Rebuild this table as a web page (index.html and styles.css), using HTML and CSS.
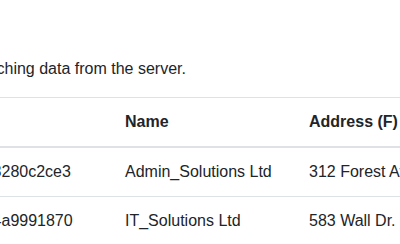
FILE: index.html
```html
<!DOCTYPE html>
<html lang="en">
<head>
<meta charset="utf-8">
<title>Companies</title>
<link rel="stylesheet" href="styles.css">
</head>
<body>
  <main class="page">
    <p class="intro">This is the result of fetching data from the server.</p>
    <table class="data-table">
      <colgroup>
        <col class="col-id">
        <col class="col-name">
        <col class="col-address">
        <col class="col-phone">
      </colgroup>
      <thead>
        <tr>
          <th>ID</th>
          <th>Name</th>
          <th>Address (F)</th>
          <th>Phone</th>
        </tr>
      </thead>
      <tbody>
        <tr>
          <td>60d5ec49b3e4a2c18280c2ce3</td>
          <td>Admin_Solutions Ltd</td>
          <td>312 Forest Ave.</td>
          <td>555-0142</td>
        </tr>
        <tr>
          <td>60d5ec5a7c91b2e34a9991870</td>
          <td>IT_Solutions Ltd</td>
          <td>583 Wall Dr.</td>
          <td>555-0178</td>
        </tr>
      </tbody>
    </table>
  </main>
</body>
</html>
```

FILE: styles.css
```css
html, body {
  margin: 0;
  overflow: hidden;
  background: #fff;
}

body {
  font-family: "Liberation Sans", Arial, sans-serif;
  font-size: 16px;
  line-height: 1.5;
  color: #212529;
}

.page {
  margin-left: -160px;
  padding-top: 57px;
  width: 900px;
}

.intro {
  margin: 0 0 16px;
}

.data-table {
  border-collapse: collapse;
  table-layout: fixed;
  width: 900px;
}

.col-id { width: 273px; }
.col-name { width: 184px; }
.col-address { width: 240px; }

.data-table th,
.data-table td {
  padding: 12px;
  text-align: left;
  vertical-align: top;
  border-top: 1px solid #dee2e6;
  white-space: nowrap;
  overflow: hidden;
}

.data-table th {
  font-weight: bold;
}

.data-table thead th {
  vertical-align: bottom;
  border-bottom: 2px solid #dee2e6;
}
```
